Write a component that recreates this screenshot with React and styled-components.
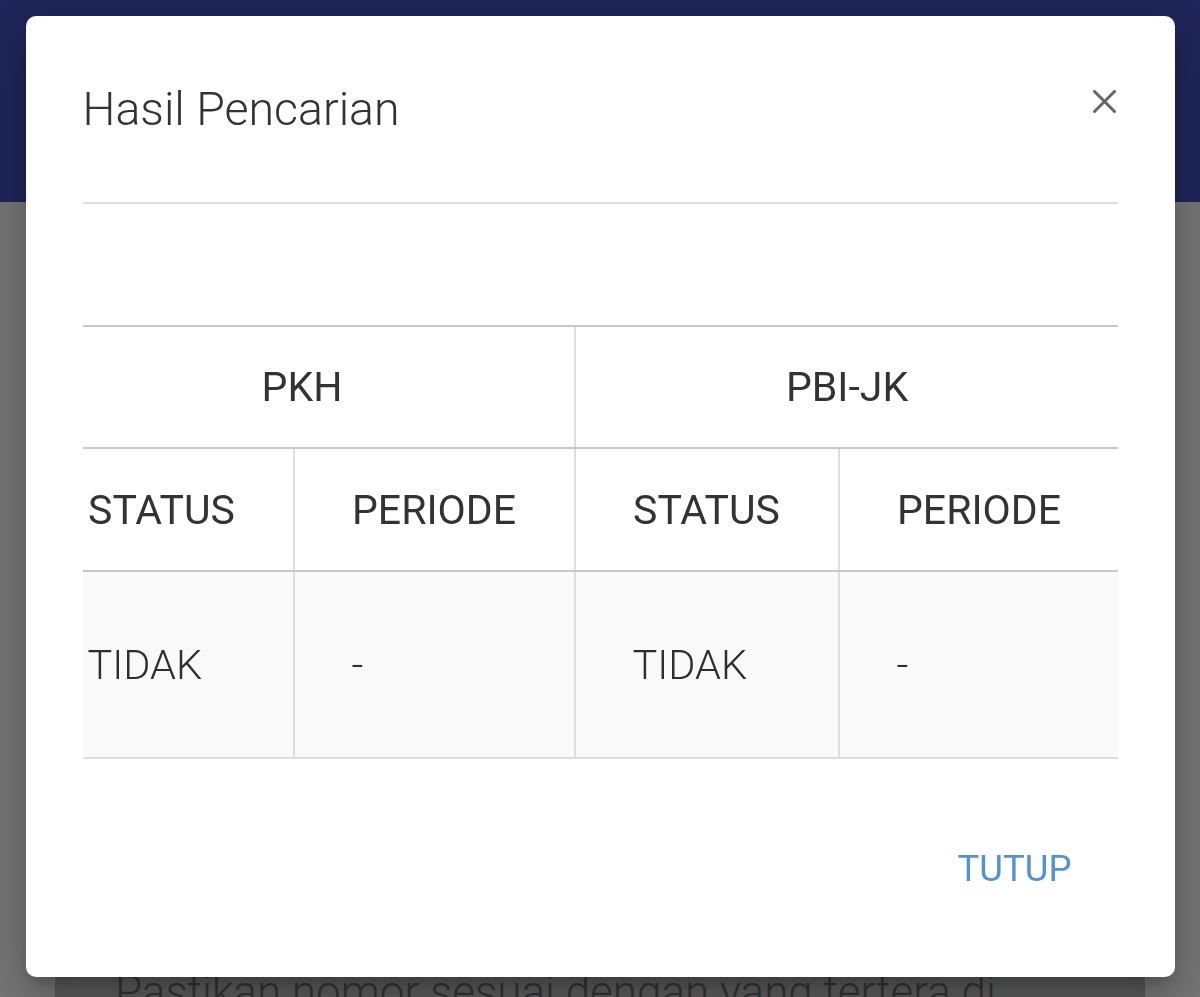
import React, { useEffect, useRef } from "react";
import styled, { createGlobalStyle } from "styled-components";

const GlobalStyle = createGlobalStyle`
  html, body {
    margin: 0;
    padding: 0;
  }
  body {
    font-family: Roboto, "Noto Sans", Arial, sans-serif;
    overflow: hidden;
  }
  * {
    box-sizing: border-box;
  }
`;

const Page = styled.div`
  height: 997px;
  overflow: hidden;
  background: #ebebeb;
`;

const AppBar = styled.header`
  height: 202px;
  background: #3e4ab2;
`;

const Main = styled.main`
  padding: 40px 55px 0;
`;

const Card = styled.section`
  background: #b6b6b6;
  padding: 722px 60px 40px;
`;

const Hint = styled.p`
  margin: 0;
  font-size: 44px;
  font-weight: 300;
  line-height: 1.3;
  color: #666;
`;

const Overlay = styled.div`
  position: fixed;
  inset: 0;
  background: rgba(0, 0, 0, 0.5);
  display: flex;
  justify-content: center;
  align-items: flex-start;
  padding-top: 16px;
`;

const Dialog = styled.div`
  width: 1149px;
  height: 961px;
  background: #fff;
  border-radius: 10px;
  display: flex;
  flex-direction: column;
  box-shadow: 0 11px 15px -7px rgba(0, 0, 0, 0.2),
    0 24px 38px 3px rgba(0, 0, 0, 0.14), 0 9px 46px 8px rgba(0, 0, 0, 0.12);
`;

const DialogHeader = styled.div`
  height: 186px;
  display: flex;
  align-items: center;
  justify-content: space-between;
  padding: 0 59px 0 57px;
`;

const Title = styled.h2`
  margin: 0;
  font-size: 46.5px;
  font-weight: 300;
  color: #333;
`;

const CloseButton = styled.button`
  border: 0;
  background: none;
  padding: 0;
  width: 23px;
  height: 23px;
  margin-bottom: 15px;
  cursor: pointer;
  display: flex;
`;

const TableScroll = styled.div`
  margin: 0 57px;
  overflow-x: auto;
  scrollbar-width: none;
  &::-webkit-scrollbar {
    display: none;
  }
`;

const Table = styled.table`
  width: 1090px;
  table-layout: fixed;
  border-collapse: collapse;
  border: 2px solid #dedede;
`;

const Cell = styled.th`
  height: ${(p) => p.$h || 122}px;
  font-size: 41px;
  font-weight: 400;
  color: #333;
  text-align: center;
  border-left: 2px solid #dedede;
  border-right: 2px solid #dedede;
  border-bottom: 2px solid #c8c8c8;
  padding: 0;
`;

const DataRow = styled.tr`
  background: #f9f9f9;
`;

const DataCell = styled.td`
  height: 187px;
  font-size: 41.5px;
  font-weight: 300;
  color: #2e2e2e;
  text-align: left;
  padding: 0 0 0 57px;
  border-left: 2px solid #dedede;
  border-right: 2px solid #dedede;
`;

const Footer = styled.div`
  flex: 1;
  display: flex;
  justify-content: flex-end;
  align-items: center;
  padding-right: 103px;
`;

const TextButton = styled.button`
  border: 0;
  background: none;
  padding: 0;
  font-family: inherit;
  font-size: 36.5px;
  font-weight: 400;
  color: #5592d2;
  cursor: pointer;
`;

const CloseIcon = () => (
  <svg width="23" height="23" viewBox="0 0 23 23">
    <path
      d="M1.5 1.5 L21.5 21.5 M21.5 1.5 L1.5 21.5"
      stroke="#666"
      strokeWidth="3"
      strokeLinecap="round"
    />
  </svg>
);

const programs = ["PKH", "PBI-JK"];

export default function App() {
  const scrollRef = useRef(null);

  useEffect(() => {
    if (scrollRef.current) scrollRef.current.scrollLeft = 54;
  }, []);

  return (
    <>
      <GlobalStyle />
      <Page>
        <AppBar />
        <Main>
          <Card>
            <Hint>Pastikan nomor sesuai dengan yang tertera di</Hint>
          </Card>
        </Main>
      </Page>

      <Overlay>
        <Dialog role="dialog">
          <DialogHeader>
            <Title>Hasil Pencarian</Title>
            <CloseButton aria-label="close">
              <CloseIcon />
            </CloseButton>
          </DialogHeader>

          <TableScroll ref={scrollRef}>
            <Table>
              <colgroup>
                <col style={{ width: 264 }} />
                <col style={{ width: 281 }} />
                <col style={{ width: 264 }} />
                <col style={{ width: 281 }} />
              </colgroup>
              <thead>
                <tr>
                  <Cell colSpan={4} $h={123}></Cell>
                </tr>
                <tr>
                  {programs.map((p) => (
                    <Cell key={p} colSpan={2}>
                      {p}
                    </Cell>
                  ))}
                </tr>
                <tr>
                  {programs.map((p) => (
                    <React.Fragment key={p}>
                      <Cell $h={123}>STATUS</Cell>
                      <Cell $h={123}>PERIODE</Cell>
                    </React.Fragment>
                  ))}
                </tr>
              </thead>
              <tbody>
                <DataRow>
                  <DataCell>TIDAK</DataCell>
                  <DataCell>-</DataCell>
                  <DataCell>TIDAK</DataCell>
                  <DataCell>-</DataCell>
                </DataRow>
              </tbody>
            </Table>
          </TableScroll>

          <Footer>
            <TextButton>TUTUP</TextButton>
          </Footer>
        </Dialog>
      </Overlay>
    </>
  );
}
